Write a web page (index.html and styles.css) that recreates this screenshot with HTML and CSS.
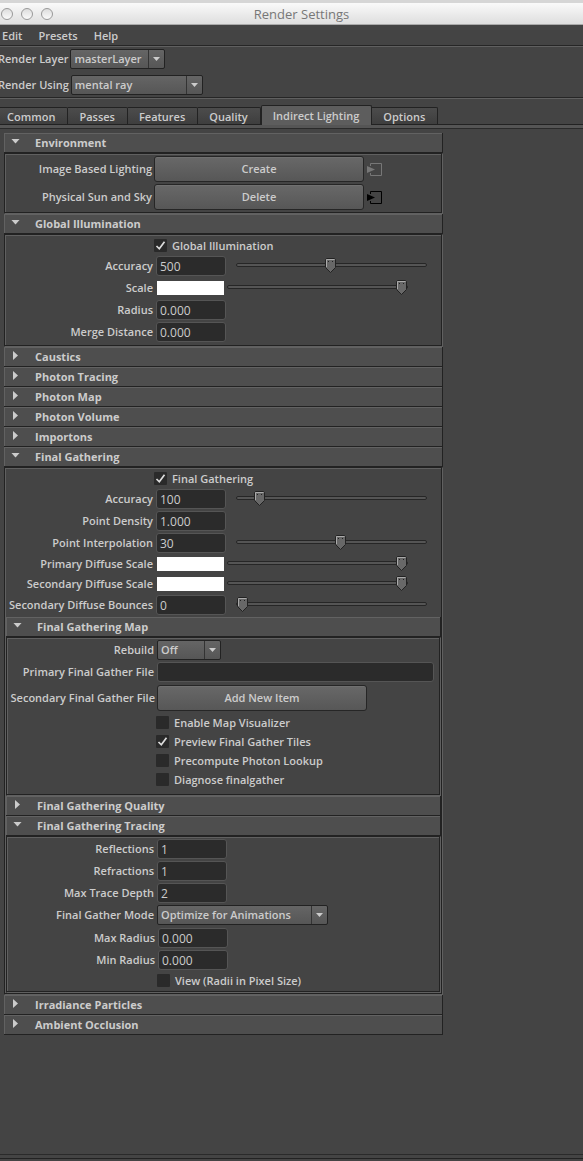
FILE: index.html
```html
<!DOCTYPE html>
<html lang="en">
<head>
    <meta charset="utf-8">
    <title>Render Settings</title>
    <link rel="stylesheet" href="styles.css">
</head>

<body>
    <div class="behind"></div>
    <header class="titlebar">
        <div class="lights">
            <button aria-label="Close"></button>
            <button aria-label="Minimize"></button>
            <button aria-label="Zoom"></button>
        </div>
        <h1>Render Settings</h1>
    </header>

    <nav class="menubar">
        <button>Edit</button>
        <button>Presets</button>
        <button>Help</button>
    </nav>

    <div class="toolbar">
        <div class="tool">
            <label for="layer">Render Layer</label>
            <select id="layer" class="layer"><option>masterLayer</option></select>
        </div>
        <div class="tool">
            <label for="using">Render Using</label>
            <select id="using" class="using"><option>mental ray</option></select>
        </div>
    </div>

    <div class="tabs" role="tablist">
        <button role="tab">Common</button>
        <button role="tab">Passes</button>
        <button role="tab">Features</button>
        <button role="tab">Quality</button>
        <button role="tab" class="active" aria-selected="true">Indirect Lighting</button>
        <button role="tab">Options</button>
    </div>
    <div class="tab-edge"></div>

    <main class="panel">
        <details open>
            <summary>Environment</summary>
            <div class="frame">
                <div class="row tall">
                    <label for="ibl">Image Based Lighting</label>
                    <button id="ibl" class="wide">Create</button>
                    <button class="connect off" aria-label="Go to image based lighting">
                        <svg width="15" height="13" viewBox="0 0 15 13"><path d="M3.5 3V.5h11v12h-11V10" fill="none" stroke="currentColor"/><path d="M0 3v7l8-3.500z" fill="currentColor"/></svg>
                    </button>
                </div>
                <div class="row tall">
                    <label for="sun">Physical Sun and Sky</label>
                    <button id="sun" class="wide">Delete</button>
                    <button class="connect" aria-label="Go to physical sun and sky">
                        <svg width="15" height="13" viewBox="0 0 15 13"><path d="M3.5 3V.5h11v12h-11V10" fill="none" stroke="currentColor"/><path d="M0 3v7l8-3.500z" fill="currentColor"/></svg>
                    </button>
                </div>
            </div>
        </details>

        <details open>
            <summary>Global Illumination</summary>
            <div class="frame illumination">
                <div class="row check">
                    <input type="checkbox" id="gi" checked>
                    <label for="gi">Global Illumination</label>
                </div>
                <div class="row">
                    <label for="gi-acc">Accuracy</label>
                    <input type="text" id="gi-acc" value="500">
                    <input type="range" aria-label="Accuracy" min="0" max="1000" value="497">
                </div>
                <div class="row">
                    <label for="gi-scale">Scale</label>
                    <button id="gi-scale" class="swatch"></button>
                    <input type="range" class="color" aria-label="Scale" value="100">
                </div>
                <div class="row">
                    <label for="gi-radius">Radius</label>
                    <input type="text" id="gi-radius" value="0.000">
                </div>
                <div class="row">
                    <label for="gi-merge">Merge Distance</label>
                    <input type="text" id="gi-merge" value="0.000">
                </div>
            </div>
        </details>

        <details><summary>Caustics</summary></details>
        <details><summary>Photon Tracing</summary></details>
        <details><summary>Photon Map</summary></details>
        <details><summary>Photon Volume</summary></details>
        <details><summary>Importons</summary></details>

        <details open>
            <summary>Final Gathering</summary>
            <div class="frame outer">
                <div class="row check">
                    <input type="checkbox" id="fg" checked>
                    <label for="fg">Final Gathering</label>
                </div>
                <div class="row">
                    <label for="fg-acc">Accuracy</label>
                    <input type="text" id="fg-acc" value="100">
                    <input type="range" aria-label="Accuracy" min="0" max="1000" value="95">
                </div>
                <div class="row">
                    <label for="fg-density">Point Density</label>
                    <input type="text" id="fg-density" value="1.000">
                </div>
                <div class="row">
                    <label for="fg-interp">Point Interpolation</label>
                    <input type="text" id="fg-interp" value="30">
                    <input type="range" aria-label="Point Interpolation" min="0" max="1000" value="553">
                </div>
                <div class="row short">
                    <label for="fg-primary">Primary Diffuse Scale</label>
                    <button id="fg-primary" class="swatch"></button>
                    <input type="range" class="color" aria-label="Primary Diffuse Scale" value="100">
                </div>
                <div class="row short">
                    <label for="fg-secondary">Secondary Diffuse Scale</label>
                    <button id="fg-secondary" class="swatch"></button>
                    <input type="range" class="color" aria-label="Secondary Diffuse Scale" value="100">
                </div>
                <div class="row">
                    <label for="fg-bounces">Secondary Diffuse Bounces</label>
                    <input type="text" id="fg-bounces" value="0">
                    <input type="range" aria-label="Secondary Diffuse Bounces" value="0">
                </div>

                <div class="nested">
                    <details open>
                        <summary>Final Gathering Map</summary>
                        <div class="frame map">
                            <div class="row">
                                <label for="rebuild">Rebuild</label>
                                <select id="rebuild" class="rebuild"><option>Off</option></select>
                            </div>
                            <div class="row">
                                <label for="primary-file">Primary Final Gather File</label>
                                <input type="text" id="primary-file" class="file">
                            </div>
                            <div class="row tall">
                                <label for="secondary-file">Secondary Final Gather File</label>
                                <button id="secondary-file" class="wide">Add New Item</button>
                            </div>
                            <div class="row check">
                                <input type="checkbox" id="visualizer">
                                <label for="visualizer">Enable Map Visualizer</label>
                            </div>
                            <div class="row check">
                                <input type="checkbox" id="tiles" checked>
                                <label for="tiles">Preview Final Gather Tiles</label>
                            </div>
                            <div class="row check">
                                <input type="checkbox" id="lookup">
                                <label for="lookup">Precompute Photon Lookup</label>
                            </div>
                            <div class="row check">
                                <input type="checkbox" id="diagnose">
                                <label for="diagnose">Diagnose finalgather</label>
                            </div>
                        </div>
                    </details>

                    <details><summary>Final Gathering Quality</summary></details>

                    <details open>
                        <summary>Final Gathering Tracing</summary>
                        <div class="frame">
                            <div class="row">
                                <label for="reflections">Reflections</label>
                                <input type="text" id="reflections" value="1">
                            </div>
                            <div class="row">
                                <label for="refractions">Refractions</label>
                                <input type="text" id="refractions" value="1">
                            </div>
                            <div class="row">
                                <label for="depth">Max Trace Depth</label>
                                <input type="text" id="depth" value="2">
                            </div>
                            <div class="row">
                                <label for="mode">Final Gather Mode</label>
                                <select id="mode" class="mode"><option>Optimize for Animations</option></select>
                            </div>
                            <div class="radii">
                                <div class="row">
                                    <label for="max-radius">Max Radius</label>
                                    <input type="text" id="max-radius" value="0.000">
                                </div>
                                <div class="row">
                                    <label for="min-radius">Min Radius</label>
                                    <input type="text" id="min-radius" value="0.000">
                                </div>
                                <div class="row check">
                                    <input type="checkbox" id="view">
                                    <label for="view">View (Radii in Pixel Size)</label>
                                </div>
                            </div>
                        </div>
                    </details>
                </div>
            </div>
        </details>

        <details><summary>Irradiance Particles</summary></details>
        <details><summary>Ambient Occlusion</summary></details>
    </main>

    <footer class="bottom"></footer>
</body>
</html>
```
FILE: styles.css
```css
* {
    box-sizing: border-box;
}

body {
    margin: 0;
    min-height: 100vh;
    display: flex;
    flex-direction: column;
    background-color: #444;
    color: #ccc;
    font: 600 11px/16px "Open Sans", "Noto Sans", sans-serif;
}

button,
input,
select {
    font: inherit;
    color: inherit;
    margin: 0;
}

button {
    padding: 0;
    border: none;
    background: none;
}

/* title bar */
.behind {
    height: 3px;
    background-color: #d6d6d6;
}

.titlebar {
    height: 22px;
    display: grid;
    grid-template-columns: 60px 1fr 40px;
    align-items: center;
    background: linear-gradient(#fafafa, #dedede);
    border-bottom: 1px solid #aaa;
}

.titlebar h1 {
    margin: 0;
    text-align: center;
    font-size: 13px;
    font-weight: 400;
    color: #777;
}

.lights {
    display: flex;
    gap: 8px;
    padding-left: 1px;
}

.lights button {
    width: 12px;
    height: 12px;
    border: 1px solid #999;
    border-radius: 50%;
    background: linear-gradient(#ddd, #fafafa);
}

.menubar {
    height: 22px;
    display: flex;
    align-items: center;
    gap: 16px;
    padding-left: 2px;
    border-bottom: 1px solid #606060;
    box-shadow: inset 0 -1px #262626;
}

/* layer and renderer pickers */
.toolbar {
    height: 52px;
    display: flex;
    flex-direction: column;
    gap: 6px;
    padding-top: 2px;
    border-bottom: 1px solid #606060;
    box-shadow: inset 0 -1px #262626;
}

.tool {
    display: flex;
    align-items: center;
    gap: 2px;
    margin-left: -2px;
}

select {
    height: 20px;
    padding: 0 18px 0 3px;
    appearance: none;
    border: 1px solid #222;
    border-radius: 2px;
    background:
        url("data:image/svg+xml,%3Csvg xmlns='http://www.w3.org/2000/svg' width='7' height='4'%3E%3Cpath d='M0 0h7L3.5 4z' fill='%23ccc'/%3E%3C/svg%3E") no-repeat right 4px center,
        linear-gradient(#333, #333) no-repeat right 15px top / 1px 100%,
        linear-gradient(#656565, #565656);
}

.layer {
    width: 95px;
}

.using {
    width: 132px;
}

.rebuild {
    width: 64px;
}

.mode {
    width: 171px;
}

/* tabs */
.tabs {
    display: flex;
    align-items: flex-end;
    margin-top: 6px;
    height: 20px;
    border-bottom: 1px solid #222;
}

.tabs button {
    height: 17px;
    padding: 1px 12px 0 11px;
    border: solid #222;
    border-width: 1px 1px 0 0;
    border-radius: 0 2px 0 0;
    background: linear-gradient(#4c4c4c, #3e3e3e);
}

.tabs button:first-child {
    padding-left: 7px;
}

.tabs .active {
    height: 20px;
    margin-bottom: -1px;
    border-left-width: 1px;
    border-radius: 2px 2px 0 0;
    background: #5d5d5d;
}

.tab-edge {
    height: 4px;
    background-color: #555;
    border-bottom: 1px solid #2a2a2a;
}

/* collapsible sections */
.panel {
    flex: 1;
    margin: 4px 140px 0 4px;
}

summary {
    height: 20px;
    display: flex;
    align-items: center;
    border: solid #222;
    border-width: 0 1px 1px 0;
    background-color: #4e4e4e;
    box-shadow: inset 1px 1px #626262;
    font-weight: 700;
}

summary::before {
    content: "";
    width: 5px;
    height: 9px;
    margin: 0 17px 2px 9px;
    background-color: #ccc;
    clip-path: polygon(0 0, 100% 50%, 0 100%);
}

details[open] > summary::before {
    width: 9px;
    height: 5px;
    margin: 0 15px 3px 7px;
    clip-path: polygon(0 0, 100% 0, 50% 100%);
}

.frame {
    --label: 147px;
    margin: 0 1px 1px 0;
    padding: 1px 0 1px 2px;
    border: solid #222;
    border-width: 1px 1px 1px 0;
    box-shadow: inset 1px 0 #222, inset 2px 1px #606060, 1px 1px #606060;
}

.frame.illumination {
    padding-bottom: 2px;
}

.frame.outer {
    padding-bottom: 0;
}

.row {
    height: 22px;
    display: flex;
    align-items: center;
    gap: 3px;
}

.row label:first-child {
    width: var(--label);
    flex: none;
    text-align: right;
    white-space: nowrap;
}

.row.short {
    height: 20px;
}

.row.tall {
    --label: 146px;
    height: 28px;
    gap: 2px;
}

.row.check {
    height: 19px;
    gap: 5px;
    padding-left: 148px;
}

input[type="text"] {
    width: 70px;
    height: 20px;
    padding: 1px 3px 0;
    border: 1px solid #555;
    border-radius: 3px;
    background-color: #2b2b2b;
    font-size: 12px;
    font-weight: 500;
}

input.file {
    width: auto;
    flex: 1;
    margin-right: 5px;
}

input[type="checkbox"] {
    width: 13px;
    height: 13px;
    appearance: none;
    border-radius: 1px;
    background: #2a2a2a no-repeat center;
}

input[type="checkbox"]:checked {
    background-image: url("data:image/svg+xml,%3Csvg xmlns='http://www.w3.org/2000/svg' width='11' height='11'%3E%3Cpath d='M1.500 6L4.300 8.800 9.500 1.700' fill='none' stroke='%23ddd' stroke-width='1.700'/%3E%3C/svg%3E");
}

.swatch {
    width: 67px;
    height: 14px;
    margin-left: 1px;
    background-color: #fff;
}

.wide {
    width: 210px;
    height: 26px;
    border: 1px solid #262626;
    border-radius: 3px;
    background: linear-gradient(#686868, #575757);
    box-shadow: inset 0 1px #707070;
}

.connect {
    height: 13px;
    margin-left: 1px;
    color: #000;
}

.connect svg {
    display: block;
}

.connect.off {
    color: #777;
}

/* sliders */
input[type="range"] {
    flex: 1;
    min-width: 0;
    height: 16px;
    margin: 0 14px 2px 7px;
    appearance: none;
    background: none;
}

input[type="range"].color {
    margin: 0 33px 2px 0;
}

input[type="range"]::-webkit-slider-runnable-track {
    height: 4px;
    border: 1px solid #262626;
    border-radius: 2px;
    background-color: #555;
}

input[type="range"]::-webkit-slider-thumb {
    appearance: none;
    width: 11px;
    height: 15px;
    margin-top: -6px;
    background: url("data:image/svg+xml,%3Csvg xmlns='http://www.w3.org/2000/svg' width='11' height='15'%3E%3Cpath d='M1.500.5h8l1 1v8l-5 5-5-5v-8z' fill='%23686868' stroke='%23222'/%3E%3Cpath d='M1.500 9V1.500h8' fill='none' stroke='%23aaa'/%3E%3Cpath d='M3 3h1v1H3zM7 3h1v1H7z' fill='%23222'/%3E%3C/svg%3E");
}

/* sections inside Final Gathering */
.nested {
    margin-top: 1px;
}

.nested .frame {
    --label: 146px;
}

.nested .row.tall {
    --label: 147px;
    margin: 1px 0;
}

.nested .map {
    padding-bottom: 5px;
}

.radii {
    --label: 147px;
    padding-top: 1px;
}

.radii .check {
    padding-left: 149px;
}

.bottom {
    height: 7px;
    border-top: 1px solid #2a2a2a;
    background: linear-gradient(#222, #222) no-repeat 0 3px / 100% 1px;
}
```
